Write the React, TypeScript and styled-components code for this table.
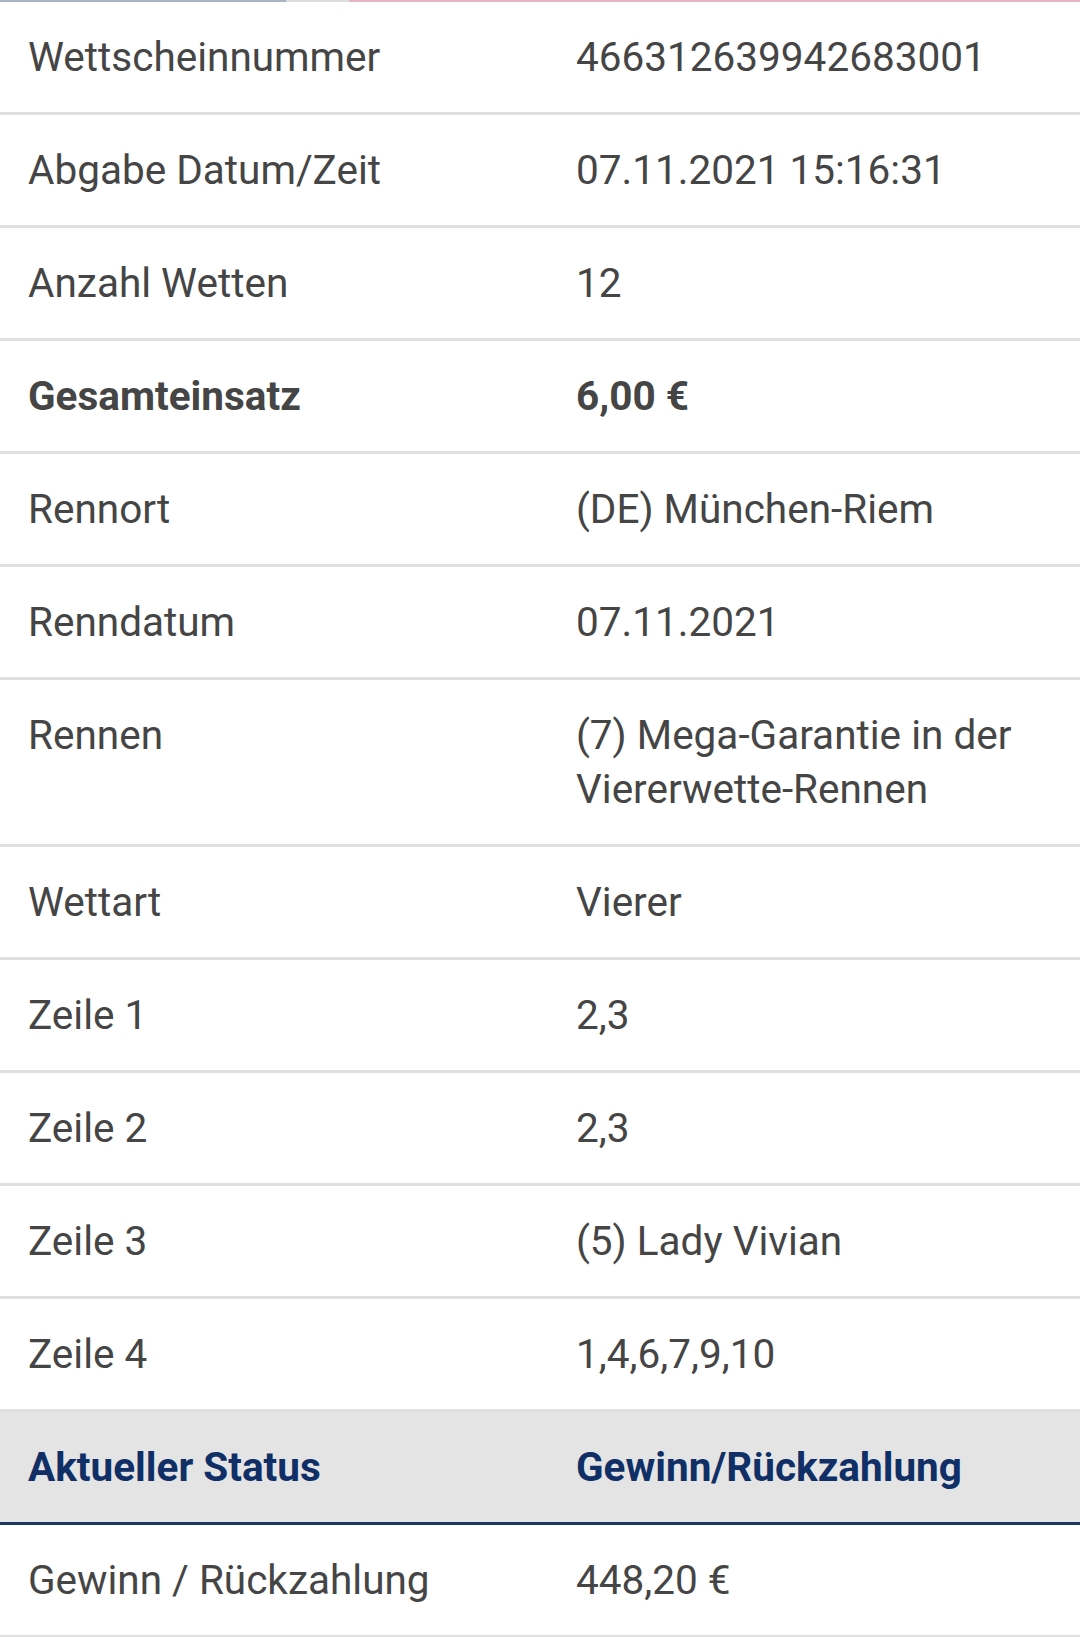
import React from "react";
import styled, { createGlobalStyle, css } from "styled-components";

const GlobalStyle = createGlobalStyle`
  html, body {
    margin: 0;
    padding: 0;
    background: #ffffff;
  }
  body {
    font-family: Roboto, "Noto Sans", "Liberation Sans", sans-serif;
    -webkit-font-smoothing: antialiased;
  }
`;

const Page = styled.div`
  width: 1080px;
  background: #ffffff;
`;

const TopStrip = styled.div`
  display: flex;
  height: 2px;
`;

const StripSegment = styled.div<{ $color: string; $width?: string }>`
  background: ${(p) => p.$color};
  ${(p) => (p.$width ? css`width: ${p.$width};` : css`flex: 1;`)}
`;

const Table = styled.div`
  display: flex;
  flex-direction: column;
`;

const Row = styled.div<{ $status?: boolean }>`
  display: grid;
  grid-template-columns: 548px 1fr;
  padding: 28px 28px 28px 28px;
  font-size: 40.5px;
  line-height: 54px;
  color: #454545;
  border-bottom: 3px solid #e0e0e0;
  ${(p) =>
    p.$status &&
    css`
      background: #e4e4e4;
      color: #0f2f66;
      font-weight: 700;
      border-bottom: 3px solid #1c3762;
    `}
`;

const Label = styled.div<{ $bold?: boolean }>`
  font-weight: ${(p) => (p.$bold ? 700 : "inherit")};
`;

const Value = styled.div<{ $bold?: boolean }>`
  font-weight: ${(p) => (p.$bold ? 700 : "inherit")};
`;

type Item = { label: string; value: string; bold?: boolean; status?: boolean };

const items: Item[] = [
  { label: "Wettscheinnummer", value: "466312639942683001" },
  { label: "Abgabe Datum/Zeit", value: "07.11.2021 15:16:31" },
  { label: "Anzahl Wetten", value: "12" },
  { label: "Gesamteinsatz", value: "6,00 €", bold: true },
  { label: "Rennort", value: "(DE) München-Riem" },
  { label: "Renndatum", value: "07.11.2021" },
  { label: "Rennen", value: "(7) Mega-Garantie in der Viererwette-Rennen" },
  { label: "Wettart", value: "Vierer" },
  { label: "Zeile 1", value: "2,3" },
  { label: "Zeile 2", value: "2,3" },
  { label: "Zeile 3", value: "(5) Lady Vivian" },
  { label: "Zeile 4", value: "1,4,6,7,9,10" },
  { label: "Aktueller Status", value: "Gewinn/Rückzahlung", status: true },
  { label: "Gewinn / Rückzahlung", value: "448,20 €" },
];

export default function App() {
  return (
    <Page>
      <GlobalStyle />
      <TopStrip>
        <StripSegment $color="#a9b3c4" $width="286px" />
        <StripSegment $color="#dadde0" $width="63px" />
        <StripSegment $color="#e6b5c4" />
      </TopStrip>
      <Table>
        {items.map((it) => (
          <Row key={it.label} $status={it.status}>
            <Label $bold={it.bold}>{it.label}</Label>
            <Value $bold={it.bold}>{it.value}</Value>
          </Row>
        ))}
      </Table>
    </Page>
  );
}
